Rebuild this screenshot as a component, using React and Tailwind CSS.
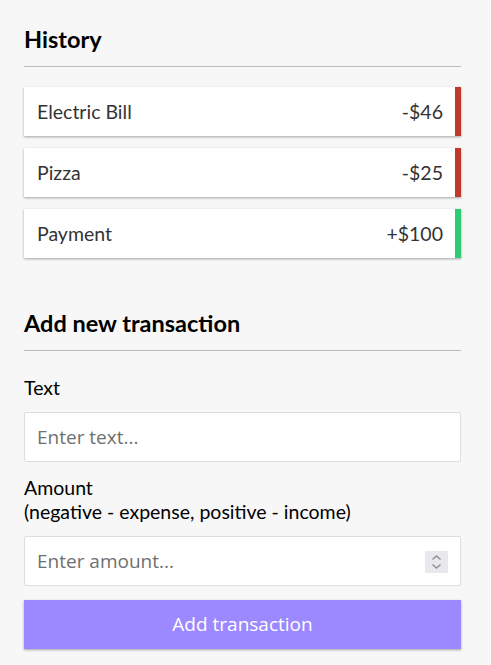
import React from "react";

const items = [
  { text: "Electric Bill", amount: "-$46", minus: true },
  { text: "Pizza", amount: "-$25", minus: true },
  { text: "Payment", amount: "+$100", minus: false },
];

export default function App() {
  return (
    <div className="min-h-[665px] bg-[#f7f7f7] overflow-hidden" style={{ fontFamily: "Lato, 'Open Sans', sans-serif" }}>
      <div className="ml-[24px] w-[437px] pt-[26px]">
        <h3 className="text-[23.5px] leading-[27px] font-bold text-black pb-[13px] border-b border-[#bbbbbb]">History</h3>
        <ul className="mt-[20px] flex flex-col gap-[12px]">
          {items.map((it) => (
            <li
              key={it.text}
              className={`h-[49px] bg-white flex items-center justify-between pl-[13px] pr-[12px] border-r-[6px] text-[19.5px] leading-[24px] text-[#333333] shadow-[0_1px_3px_rgba(0,0,0,0.12),0_1px_2px_rgba(0,0,0,0.24)] ${it.minus ? "border-[#c0392b]" : "border-[#2ecc71]"}`}
            >
              <span>{it.text}</span>
              <span>{it.amount}</span>
            </li>
          ))}
        </ul>
        <h3 className="mt-[52px] text-[23.5px] leading-[27px] font-bold text-black pb-[13px] border-b border-[#bbbbbb]">Add new transaction</h3>
        <form onSubmit={(e) => e.preventDefault()}>
          <label className="block mt-[25px] text-[19.5px] leading-[24px] text-black">Text</label>
          <input
            type="text"
            placeholder="Enter text..."
            className="block mt-[12px] w-full h-[50px] bg-white border border-[#dedede] rounded-[2px] px-[12px] text-[19px] placeholder:text-[#6f6f6f] outline-none"
            style={{ fontFamily: "'Open Sans', sans-serif" }}
          />
          <label className="block mt-[14px] text-[19.5px] leading-[24px] text-black">
            Amount <br />
            (negative - expense, positive - income)
          </label>
          <div className="relative mt-[12px]">
            <input
              type="text"
              inputMode="numeric"
              placeholder="Enter amount..."
              className="block w-full h-[50px] bg-white border border-[#dedede] rounded-[2px] px-[12px] text-[19px] placeholder:text-[#6f6f6f] outline-none"
              style={{ fontFamily: "'Open Sans', sans-serif" }}
            />
            <div className="absolute right-[13px] top-[15px] w-[23px] h-[22px] bg-[#e9e9ed] flex items-center justify-center">
              <svg width="23" height="22" viewBox="0 0 23 22" fill="none" stroke="#8e8e93" strokeWidth="1.4">
                <path d="M7.5 8.5 L11.5 5 L15.5 8.5" />
                <path d="M7.5 13.5 L11.5 17 L15.5 13.5" />
              </svg>
            </div>
          </div>
          <button
            type="submit"
            className="block mt-[14px] w-full h-[49px] bg-[#9c88ff] text-white text-[19px] shadow-[0_1px_3px_rgba(0,0,0,0.12),0_1px_2px_rgba(0,0,0,0.24)]"
            style={{ fontFamily: "'Open Sans', sans-serif" }}
          >
            Add transaction
          </button>
        </form>
      </div>
    </div>
  );
}
